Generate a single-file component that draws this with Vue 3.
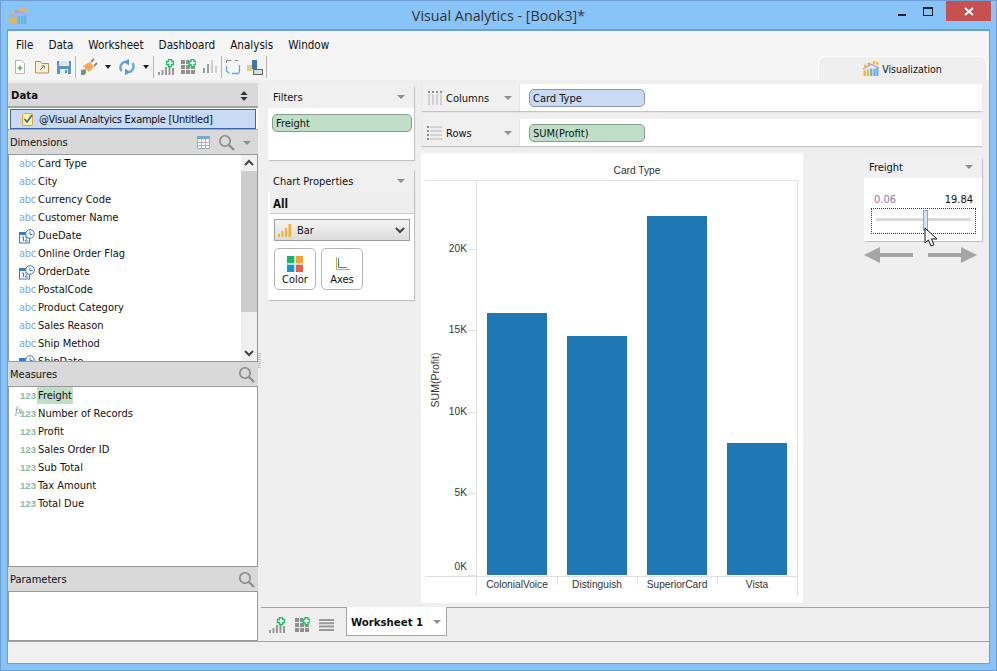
<template>
  <div class="win">
    <svg class="defs" aria-hidden="true">
      <symbol id="logo" viewBox="0 0 17 16">
        <rect x="0.500" y="10" width="2.500" height="6" fill="#fdb32b" />
        <rect x="4" y="9" width="2.500" height="7" fill="#fdb32b" />
        <rect x="7.500" y="8" width="2.500" height="8" fill="#62b5ec" />
        <rect x="11" y="8" width="2.500" height="8" fill="#62b5ec" />
        <rect x="14" y="7" width="2.500" height="9" fill="#62b5ec" />
        <path d="M0 8.500 9 3.500l8 4" fill="none" stroke="#c79ad2" stroke-width="1.500" />
        <rect x="1" y="4" width="2.500" height="2.500" fill="#fdb32b" />
        <rect x="5" y="2" width="2.500" height="2" fill="#8dc63f" />
        <rect x="10.500" y="0" width="2.500" height="3" fill="#fdb32b" />
        <rect x="14" y="1" width="2.500" height="3" fill="#fdb32b" />
      </symbol>
      <symbol id="lens" viewBox="0 0 17 17">
        <circle cx="7" cy="7" r="5.200" fill="none" stroke="#8a8a8a" stroke-width="1.600" />
        <path d="m11 11 5 5" stroke="#8a8a8a" stroke-width="2.200" />
      </symbol>
      <symbol id="bars-plus" viewBox="0 0 16 16">
        <path d="M0 13h2v3H0zM3.500 11h2v5h-2zM7 8h2v8H7zM10.500 8h2v8h-2zM14 9h2v7h-2z" fill="#999" />
        <path d="M8.500 2.500h2v-2h3v2h2v3h-2v2h-3v-2h-2z" fill="#fff" stroke="#14c060" stroke-width="1.300" />
      </symbol>
      <symbol id="grid-plus" viewBox="0 0 16 16">
        <path d="M1 1h4v4H1zM6 1h3v4H6zM1 6h4v4H1zM6 6h4v4H6zM11 8h4v2h-4zM1 11h4v4H1zM6 11h4v4H6zM11 11h4v4h-4z" fill="#8f8f8f" />
        <path d="M9 2.500h2v-2h3v2h2v3h-2v2h-3v-2H9z" fill="#fff" stroke="#14c060" stroke-width="1.300" />
      </symbol>
      <symbol id="date" viewBox="0 0 16 15">
        <rect x="0.500" y="3.500" width="10" height="10.500" fill="#fff" stroke="#3f78c8" />
        <rect x="0" y="3" width="11" height="3" fill="#3f78c8" />
        <path d="M3 8h1.500v4M6 8h3l-3 4h3" fill="none" stroke="#3f78c8" />
        <circle cx="11" cy="5" r="4.300" fill="#fff" stroke="#3f78c8" />
        <path d="M11 2.500V5.500h2.500" fill="none" stroke="#3f78c8" />
      </symbol>
    </svg>

    <header class="titlebar">
      <svg class="app-logo"><use href="#logo" /></svg>
      <div class="title">Visual Analytics - [Book3]*</div>
      <div class="win-controls">
        <span class="min"></span>
        <span class="max"></span>
        <span class="close">
          <svg width="10" height="9" viewBox="0 0 10 9"><path d="m1 1 8 7M9 1 1 8" stroke="#fff" stroke-width="2" /></svg>
        </span>
      </div>
    </header>

    <div class="frame">
      <nav class="menu">
        <span v-for="m in menus" :key="m">{{ m }}</span>
      </nav>

      <div class="toolbar">
        <span class="tb">
          <svg width="16" height="16" viewBox="0 0 16 16">
            <path d="M3.500 1.500h6l3 3v10h-9z" fill="#fff" stroke="#b5b5b5" />
            <path d="M8 6.500v5M5.500 9h5" stroke="#2a9a4a" stroke-width="1.200" />
          </svg>
        </span>
        <span class="tb">
          <svg width="16" height="16" viewBox="0 0 16 16">
            <path d="M1.500 14V2.500h5l1.500 2h6.500V14z" fill="#fbeecb" stroke="#b98f52" />
            <path d="m6 11 4-4M7.500 6.800H10.300V9.500" fill="none" stroke="#4c97c7" />
          </svg>
        </span>
        <span class="tb">
          <svg width="14" height="14" viewBox="0 0 14 14">
            <path d="M0 1h14v13H0z" fill="#5f93c4" />
            <path d="M2 1h10v5H2z" fill="#dfe5ea" />
            <path d="M3 9h8v5H3z" fill="#e8eef4" />
            <path d="M8 10h2v3H8z" fill="#5f93c4" />
          </svg>
        </span>
        <i class="sep"></i>
        <span class="tb wide">
          <svg width="18" height="18" viewBox="0 0 18 18">
            <path d="M1 17v-5l5-1-1 6z" fill="#888" />
            <path d="m3 8 7-4 4 5-5 5z" fill="#f5a94a" />
            <path d="m11 4 3-3M14 8l3-3" stroke="#8a8a8a" stroke-width="1.800" />
            <circle cx="5" cy="14" r="1.200" fill="#2fb24c" />
          </svg>
        </span>
        <span class="caret-box"><i class="caret dark"></i></span>
        <span class="tb wide">
          <svg width="16" height="16" viewBox="0 0 16 16">
            <path d="M2.500 12A6 6 0 0 1 6 2.800" fill="none" stroke="#6aa5d8" stroke-width="2.400" />
            <path d="M13.500 4A6 6 0 0 1 10 13.200" fill="none" stroke="#6aa5d8" stroke-width="2.400" />
            <path d="M10 0 4.500 2.800 10 6.500zM6 16l5.500-2.800L6 9.500z" fill="#5a9ad2" />
          </svg>
        </span>
        <span class="caret-box"><i class="caret dark"></i></span>
        <i class="sep"></i>
        <span class="tb"><svg width="16" height="16"><use href="#bars-plus" /></svg></span>
        <span class="tb"><svg width="16" height="16"><use href="#grid-plus" /></svg></span>
        <span class="tb">
          <svg width="16" height="16" viewBox="0 0 16 16">
            <path d="M1 9h2v5H1zM5 5h2v9H5z" fill="#9a9a9a" />
            <path d="M9 1h2v13H9zM13 7h2v7h-2z" fill="#cfcfcf" />
          </svg>
        </span>
        <i class="sep"></i>
        <span class="tb">
          <svg width="16" height="16" viewBox="0 0 16 16">
            <path d="M1.500 4V1.500h5M10 1.500h3" fill="none" stroke="#888" />
            <path d="M1.500 7v5l3 2.500M7 14.500h6l1.500-2V6" fill="none" stroke="#6ea6dc" stroke-width="1.300" />
          </svg>
        </span>
        <span class="tb">
          <svg width="16" height="16" viewBox="0 0 16 16">
            <rect x="0" y="6" width="5" height="6" fill="#f2c77f" />
            <rect x="5" y="1" width="5" height="9" fill="#3f78a8" />
            <rect x="6.500" y="10.500" width="9" height="5" fill="#ddd" stroke="#666" />
          </svg>
        </span>
        <i class="sep"></i>
        <div class="viz-tab">
          <svg class="viz-logo"><use href="#logo" /></svg>
          <span>Visualization</span>
        </div>
      </div>

      <main class="main">
        <aside class="side">
          <div class="side-head data-head">
            <b>Data</b>
            <svg width="8" height="12" viewBox="0 0 8 12"><path d="M4 1 7.500 5h-7zM4 11 .5 7h7z" fill="#333" /></svg>
          </div>
          <div class="source-wrap">
            <div class="source">
              <svg width="14" height="15" viewBox="0 0 14 15">
                <rect x="1.500" y="1.500" width="10" height="12" rx="1" fill="#fdf1a5" stroke="#d8a93a" />
                <path d="m3.500 7 2.500 3 5-7" fill="none" stroke="#2f5fa8" stroke-width="1.600" />
              </svg>
              <span>@Visual Analtyics Example [Untitled]</span>
            </div>
          </div>

          <div class="side-head">
            <span>Dimensions</span>
            <div class="head-tools">
              <svg width="13" height="13" viewBox="0 0 13 13">
                <path d="M.5.500h12v12H.500z" fill="#fff" stroke="#9ab" />
                <path d="M0 0h13v3H0z" fill="#7aa6d6" />
                <path d="M.5 6.500h12M.5 9.500h12M4.500 3v10M8.500 3v10" stroke="#aab" />
              </svg>
              <svg width="17" height="17"><use href="#lens" /></svg>
              <i class="caret"></i>
            </div>
          </div>
          <div class="list dims">
            <div class="rows">
              <div v-for="d in dimensions" :key="d.name" class="row">
                <svg v-if="d.date" class="date-ico"><use href="#date" /></svg>
                <span v-else class="abc">abc</span>
                <span class="name">{{ d.name }}</span>
              </div>
            </div>
            <div class="scroll">
              <svg class="scroll-btn" width="16" height="16" viewBox="0 0 16 16"><path d="m4 10 4-4 4 4" fill="none" stroke="#444" stroke-width="2" /></svg>
              <div class="scroll-track"><div class="thumb"></div></div>
              <svg class="scroll-btn" width="16" height="16" viewBox="0 0 16 16"><path d="m4 6 4 4 4-4" fill="none" stroke="#444" stroke-width="2" /></svg>
            </div>
          </div>

          <div class="side-head">
            <span>Measures</span>
            <svg width="17" height="17"><use href="#lens" /></svg>
          </div>
          <div class="list measures">
            <div v-for="m in measures" :key="m.name" class="row">
              <span v-if="m.calc" class="fx">fx</span>
              <span class="num">123</span>
              <span class="name" :class="{ picked: m.picked }">{{ m.name }}</span>
            </div>
          </div>

          <div class="side-head">
            <span>Parameters</span>
            <svg width="17" height="17"><use href="#lens" /></svg>
          </div>
          <div class="list params"></div>
        </aside>

        <div class="split"><i></i></div>

        <section class="work">
          <div class="sheet">
            <div class="cards">
              <div class="card filters">
                <div class="card-head"><span>Filters</span><i class="caret"></i></div>
                <div class="pill green wide-pill">Freight</div>
              </div>
              <div class="card props">
                <div class="card-head"><span>Chart Properties</span><i class="caret"></i></div>
                <div class="all">All</div>
                <div class="select">
                  <svg width="15" height="14" viewBox="0 0 15 14">
                    <path d="M0 11h2v3H0zM3.500 8h2v6h-2zM7 5h2v9H7zM10.500 1h2.500v13h-2.500z" fill="#f9ae2e" />
                  </svg>
                  <span>Bar</span>
                  <svg class="chev" width="10" height="8" viewBox="0 0 10 8"><path d="m1 2 4 4 4-4" fill="none" stroke="#444" stroke-width="2" /></svg>
                </div>
                <div class="prop-btns">
                  <div class="prop-btn">
                    <svg width="16" height="16" viewBox="0 0 16 16">
                      <rect width="7.300" height="7.300" fill="#12b76a" />
                      <rect x="8.700" width="7.300" height="7.300" fill="#f9a02b" />
                      <rect y="8.700" width="7.300" height="7.300" fill="#0e9bd0" />
                      <rect x="8.700" y="8.700" width="7.300" height="7.300" fill="#f0584a" />
                    </svg>
                    <span>Color</span>
                  </div>
                  <div class="prop-btn">
                    <svg width="16" height="16" viewBox="0 0 16 16">
                      <path d="M2.500 1v12.500H16" fill="none" stroke="#f79a25" />
                      <path d="M4.500 2v9.500H13" fill="none" stroke="#2f86d0" />
                    </svg>
                    <span>Axes</span>
                  </div>
                </div>
              </div>
            </div>

            <div class="stage">
              <div class="shelf">
                <div class="shelf-label">
                  <svg width="15" height="15" viewBox="0 0 15 15">
                    <path d="M1 1h2v2H1zM5 1h2v2H5zM9 1h2v2H9zM13 1h2v2h-2z" fill="#8c8c8c" />
                    <path d="M1 4h2v11H1zM5 4h2v11H5zM9 4h2v11H9zM13 4h2v11h-2z" fill="#d2d2d2" />
                  </svg>
                  <span>Columns</span>
                  <i class="caret"></i>
                </div>
                <div class="shelf-body"><div class="pill blue">Card Type</div></div>
              </div>
              <div class="shelf">
                <div class="shelf-label">
                  <svg width="15" height="15" viewBox="0 0 15 15">
                    <path d="M0 1h2v2H0zM0 5h2v2H0zM0 9h2v2H0zM0 13h2v2H0z" fill="#8c8c8c" />
                    <path d="M3 1h12v2H3zM3 5h12v2H3zM3 9h12v2H3zM3 13h12v2H3z" fill="#d2d2d2" />
                  </svg>
                  <span>Rows</span>
                  <i class="caret"></i>
                </div>
                <div class="shelf-body"><div class="pill green">SUM(Profit)</div></div>
              </div>

              <div class="canvas">
                <svg class="chart" width="382" height="450" viewBox="0 0 382 450">
                  <text x="216" y="21" text-anchor="middle">Card Type</text>
                  <path d="M4 27.500h373M4 423.500h373M55.500 28v415M376.500 28v415" fill="none" stroke="#e0e0e0" />
                  <path d="M136.500 424v8M216.500 424v8M296.500 424v8" stroke="#e6e6e6" />
                  <g v-for="t in ticks" :key="t.label">
                    <path :d="`M47 ${t.y + 0.5}h8`" stroke="#e0e0e0" />
                    <text x="46" :y="t.labelY" text-anchor="end">{{ t.label }}</text>
                  </g>
                  <text class="axis-title" transform="translate(18 227) rotate(-90)" text-anchor="middle">SUM(Profit)</text>
                  <g v-for="b in bars" :key="b.name">
                    <rect :x="b.x" :y="b.top" width="60" :height="422 - b.top" fill="#1f77b4" />
                    <text :x="b.x + 30" y="435" text-anchor="middle">{{ b.name }}</text>
                  </g>
                </svg>

                <div class="right-col">
                  <div class="card slider-card">
                    <div class="card-head"><span>Freight</span><i class="caret"></i></div>
                    <div class="range-vals"><span class="low">0.06</span><span>19.84</span></div>
                    <div class="slider">
                      <div class="track"></div>
                      <div class="knob"></div>
                      <svg class="pointer" width="14" height="20" viewBox="0 0 14 20">
                        <path d="M1 1v15l3.500-3 2.500 6 3-1.300-2.600-5.700H13z" fill="#fff" stroke="#111" />
                      </svg>
                    </div>
                  </div>
                  <div class="arrows">
                    <svg width="50" height="16" viewBox="0 0 50 16"><path d="M0 8 16 0v6h33v4H16v6z" fill="#a6a6a6" /></svg>
                    <svg width="50" height="16" viewBox="0 0 50 16"><path d="M50 8 34 0v6H1v4h33v6z" fill="#a6a6a6" /></svg>
                  </div>
                </div>
              </div>
            </div>
          </div>

          <div class="tabs">
            <div class="tab-tools">
              <svg width="16" height="16"><use href="#bars-plus" /></svg>
              <svg width="16" height="16"><use href="#grid-plus" /></svg>
              <svg width="15" height="12" viewBox="0 0 15 12">
                <path d="M0 0h15v2H0zM0 3.300h15v2H0zM0 6.600h15v2H0zM0 10h15v2H0z" fill="#999" />
              </svg>
            </div>
            <div class="tab">
              <b>Worksheet 1</b>
              <i class="caret"></i>
            </div>
            <div class="tab-rest"></div>
          </div>
        </section>
      </main>

      <footer class="status"></footer>
    </div>
  </div>
</template>

<script setup>
const menus = ["File", "Data", "Worksheet", "Dashboard", "Analysis", "Window"];

const dimensions = [
  { name: "Card Type" },
  { name: "City" },
  { name: "Currency Code" },
  { name: "Customer Name" },
  { name: "DueDate", date: true },
  { name: "Online Order Flag" },
  { name: "OrderDate", date: true },
  { name: "PostalCode" },
  { name: "Product Category" },
  { name: "Sales Reason" },
  { name: "Ship Method" },
  { name: "ShipDate", date: true },
];

const measures = [
  { name: "Freight", picked: true },
  { name: "Number of Records", calc: true },
  { name: "Profit" },
  { name: "Sales Order ID" },
  { name: "Sub Total" },
  { name: "Tax Amount" },
  { name: "Total Due" },
];

const ticks = [
  { label: "20K", y: 96, labelY: 99 },
  { label: "15K", y: 177, labelY: 180 },
  { label: "10K", y: 259, labelY: 262 },
  { label: "5K", y: 340, labelY: 343 },
  { label: "0K", y: 422, labelY: 417 },
];

const bars = [
  { name: "ColonialVoice", x: 66, top: 160 },
  { name: "Distinguish", x: 146, top: 183 },
  { name: "SuperiorCard", x: 226, top: 63 },
  { name: "Vista", x: 306, top: 290 },
];
</script>

<style>
html,
body {
  margin: 0;
  background: #89c4f8;
}
</style>

<style scoped>
.defs {
  display: none;
}
.win {
  width: 997px;
  height: 671px;
  box-sizing: border-box;
  display: flex;
  flex-direction: column;
  background: #89c4f8;
  border: 1px solid #6d9fd3;
  font-family: "DejaVu Sans Condensed", "Liberation Sans", sans-serif;
  font-size: 11px;
  color: #111;
  overflow: hidden;
}
.titlebar {
  height: 29px;
  flex: none;
  display: flex;
  align-items: center;
  position: relative;
}
.app-logo {
  width: 17px;
  height: 16px;
  margin: 0 0 0 9px;
}
.title {
  position: absolute;
  left: 0;
  right: 0;
  top: 5px;
  text-align: center;
  font-family: "Open Sans", sans-serif;
  font-size: 14.300px;
  color: #333;
}
.win-controls {
  margin-left: auto;
  align-self: flex-start;
  display: flex;
  align-items: center;
  margin-right: 5px;
}
.min {
  width: 8px;
  height: 2px;
  background: #222;
  margin: 7px 17px 0 0;
}
.max {
  width: 8px;
  height: 6px;
  border: 1px solid #222;
  border-top-width: 2px;
  margin-right: 13px;
}
.close {
  width: 45px;
  height: 20px;
  background: #c75050;
  display: flex;
  align-items: center;
  justify-content: center;
}
.frame {
  flex: 1;
  min-height: 0;
  margin: 0 7px 7px;
  display: flex;
  flex-direction: column;
  background: #f0f0f0;
  border-top: 1px solid #6d9fd3;
  box-shadow: 0 0 0 1px #6d9fd3;
}
.menu {
  height: 22px;
  flex: none;
  box-sizing: border-box;
  display: flex;
  align-items: center;
  gap: 15px;
  padding: 5px 0 0 8px;
  background: #f5f5f5;
  font-size: 11.600px;
}
.toolbar {
  height: 27px;
  flex: none;
  display: flex;
  align-items: center;
  padding-left: 1px;
  background: #f5f5f5;
}
.tb {
  width: 22px;
  height: 24px;
  display: flex;
  align-items: center;
  justify-content: center;
}
.tb.wide {
  width: 26px;
}
.caret-box {
  width: 12px;
  display: flex;
  justify-content: center;
}
.sep {
  width: 1px;
  height: 22px;
  background: #b4b4b4;
  margin: 0;
}
.caret-box + .sep {
  margin: 0 1px;
}
.caret {
  display: inline-block;
  width: 0;
  height: 0;
  border: 4px solid transparent;
  border-top: 4px solid #8f8f8f;
  border-bottom: 0;
}
.caret.dark {
  border-width: 4px 3.500px 0;
  border-top-color: #222;
}
.viz-tab {
  margin-left: auto;
  margin-right: 2px;
  align-self: flex-end;
  width: 169px;
  height: 24px;
  box-sizing: border-box;
  display: flex;
  align-items: center;
  justify-content: center;
  gap: 3px;
  border: 1px solid #fff;
  border-bottom: 0;
  border-radius: 7px 7px 0 0;
  background: #efefef;
  font-size: 10.500px;
}
.viz-logo {
  width: 16px;
  height: 15px;
}
.main {
  flex: 1;
  min-height: 0;
  display: flex;
  background: #efefef;
}
.side {
  width: 250px;
  flex: none;
  margin-top: 3px;
  display: flex;
  flex-direction: column;
}
.side-head {
  height: 24px;
  flex: none;
  box-sizing: border-box;
  display: flex;
  align-items: center;
  justify-content: space-between;
  padding: 1px 3px 0 2px;
  background: #d9d9d9;
}
.data-head {
  height: 23px;
  font-size: 11.300px;
  padding: 2px 10px 0 3px;
}
.head-tools {
  display: flex;
  align-items: center;
  gap: 8px;
  padding-right: 4px;
}
.source-wrap {
  height: 24px;
  flex: none;
  box-sizing: border-box;
  padding: 1px 2px 0;
  background: #fff;
  border-top: 2px solid #a3a3a3;
  border-bottom: 1px solid #a3a3a3;
}
.source {
  height: 100%;
  box-sizing: border-box;
  display: flex;
  align-items: center;
  gap: 4px;
  padding-left: 10px;
  background: #c9daf5;
  border: 1px solid #3b66b0;
  letter-spacing: -0.28px;
}
.list {
  box-sizing: border-box;
  flex: none;
  background: #fff;
  border: 1px solid #999;
  overflow: hidden;
}
.dims {
  height: 208px;
  display: flex;
}
.rows {
  flex: 1;
  min-width: 0;
}
.measures {
  height: 181px;
}
.params {
  height: 50px;
}
.row {
  height: 18px;
  box-sizing: border-box;
  padding: 0 0 2px 10px;
  display: flex;
  align-items: center;
  position: relative;
}
.abc {
  width: 16px;
  margin-right: 3px;
  color: #7fa9e6;
  font-size: 11px;
  letter-spacing: -0.3px;
  text-align: center;
}
.date-ico {
  width: 16px;
  height: 15px;
  margin: 2px 3px 0 0;
}
.num {
  width: 16px;
  margin: 0 2px 0 1px;
  color: #8db8a5;
  font-family: "Liberation Sans", sans-serif;
  font-size: 9.500px;
  font-weight: 700;
  text-align: center;
}
.fx {
  position: absolute;
  left: 6px;
  top: 0;
  color: #7d9c8c;
  font-family: "Liberation Serif", serif;
  font-style: italic;
  font-size: 10px;
}
.picked {
  background: #bfdfc9;
  line-height: 17px;
  padding: 0 1px;
  margin-left: -1px;
}
.scroll {
  width: 16px;
  flex: none;
  display: flex;
  flex-direction: column;
  background: #f0f0f0;
}
.scroll-btn {
  flex: none;
}
.scroll-track {
  flex: 1;
}
.thumb {
  height: 141px;
  background: #cdcdcd;
}
.split {
  width: 10px;
  flex: none;
}
.split i {
  display: block;
  width: 3px;
  height: 15px;
  margin-top: 273px;
  background: repeating-linear-gradient(#bbb 0 1px, transparent 1px 2px);
}
.work {
  flex: 1;
  min-width: 0;
  display: flex;
  flex-direction: column;
}
.sheet {
  flex: 1;
  min-height: 0;
  display: flex;
  gap: 8px;
  padding: 4px 7px 0 0;
}
.cards {
  width: 146px;
  flex: none;
  display: flex;
  flex-direction: column;
  gap: 8px;
}
.card {
  background: #fff;
  border-radius: 4px 4px 0 0;
  box-shadow: 1px 1px 1px #bdbdbd;
}
.card-head {
  height: 24px;
  box-sizing: border-box;
  display: flex;
  align-items: center;
  justify-content: space-between;
  padding: 2px 9px 0 5px;
  background: #f0f0f0;
  border-radius: 4px 4px 0 0;
}
.filters {
  height: 76px;
}
.props {
  height: 132px;
}
.pill {
  width: 116px;
  height: 18px;
  box-sizing: border-box;
  border-radius: 5px;
  line-height: 17px;
  padding-left: 3px;
  border: 1px solid #8a9a90;
}
.green {
  background: #bfdfc9;
}
.blue {
  background: #c9daf5;
  border-color: #8a96a8;
}
.wide-pill {
  width: 140px;
  margin: 6px 0 0 4px;
}
.all {
  height: 22px;
  box-sizing: border-box;
  padding: 2px 0 0 3px;
  margin-left: 2px;
  line-height: 20px;
  font-weight: 700;
  font-size: 11.500px;
  background: #eeeeef;
  border-bottom: 1px solid #ccc;
}
.select {
  height: 22px;
  box-sizing: border-box;
  margin: 5px 4px 0 6px;
  display: flex;
  align-items: center;
  gap: 4px;
  padding-left: 3px;
  border: 1px solid #a0a0a0;
  background: linear-gradient(#f4f4f4, #dcdcdc);
}
.chev {
  margin-left: auto;
  margin-right: 4px;
}
.prop-btns {
  display: flex;
  gap: 5px;
  margin: 7px 0 0 6px;
}
.prop-btn {
  height: 42px;
  width: 42px;
  box-sizing: border-box;
  display: flex;
  flex-direction: column;
  align-items: center;
  justify-content: flex-end;
  gap: 1px;
  padding-bottom: 3px;
  border: 1px solid #b4b4b4;
  border-radius: 5px;
  background: #fff;
}
.stage {
  flex: 1;
  min-width: 0;
  display: flex;
  flex-direction: column;
  gap: 8px;
}
.shelf {
  height: 27px;
  flex: none;
  display: flex;
  background: #fff;
  box-shadow: 0 1px 1px #c4c4c4;
}
.shelf-label {
  width: 98px;
  flex: none;
  box-sizing: border-box;
  display: flex;
  align-items: center;
  padding-left: 5px;
  gap: 4px;
  background: #f0f0f0;
  border-right: 1px solid #ece8d8;
}
.shelf-label span {
  padding-top: 1px;
}
.shelf-label .caret {
  margin-left: auto;
  margin-right: 7px;
}
.shelf-body {
  flex: 1;
  display: flex;
  align-items: center;
  padding: 0 0 0 9px;
}
.canvas {
  flex: none;
  display: flex;
  margin-top: -1px;
  margin-left: -1px;
}
.chart {
  display: block;
  background: #fff;
  flex: none;
}
.chart text {
  font-family: "Liberation Sans", Arial, sans-serif;
  font-size: 10.200px;
  fill: #333;
}
.chart .axis-title {
  font-size: 10.500px;
}
.right-col {
  width: 113px;
  margin: 3px 0 0 61px;
  flex: none;
}
.slider-card {
  width: 118px;
  height: 85px;
}
.slider-card .card-head {
  height: 22px;
  padding-top: 0;
}
.range-vals {
  display: flex;
  justify-content: space-between;
  padding: 14px 9px 0 10px;
  line-height: 16px;
}
.low {
  color: #8c7a9c;
}
.slider {
  position: relative;
  margin: 0 6px 0 7px;
  height: 26px;
  box-sizing: border-box;
  border: 1px dotted #333;
}
.track {
  position: absolute;
  left: 4px;
  right: 4px;
  top: 9px;
  height: 3px;
  background: #d9d9d9;
}
.knob {
  position: absolute;
  left: 51px;
  top: 1px;
  width: 5px;
  height: 21px;
  background: #d4e4f8;
  border: 1px solid #8fa8c8;
  box-sizing: border-box;
}
.pointer {
  position: absolute;
  left: 52px;
  top: 18px;
}
.arrows {
  display: flex;
  justify-content: space-between;
  margin-top: 6px;
}
.tabs {
  height: 34px;
  flex: none;
  display: flex;
  margin-left: -7px;
}
.tab-tools {
  width: 85px;
  flex: none;
  display: flex;
  align-items: center;
  gap: 9px;
  padding: 0 0 0 8px;
  box-sizing: border-box;
  border-top: 1px solid #a3a3a3;
}
.tab {
  width: 101px;
  height: 29px;
  flex: none;
  box-sizing: border-box;
  display: flex;
  align-items: center;
  justify-content: space-between;
  padding: 2px 5px 0 4px;
  background: #fff;
  border: 1px solid #a3a3a3;
  border-top: 0;
  font-size: 11.300px;
}
.tab-rest {
  flex: 1;
  border-top: 1px solid #a3a3a3;
}
.status {
  height: 21px;
  flex: none;
  background: #f0f0f0;
  border-top: 1px solid #a3a3a3;
}
</style>
